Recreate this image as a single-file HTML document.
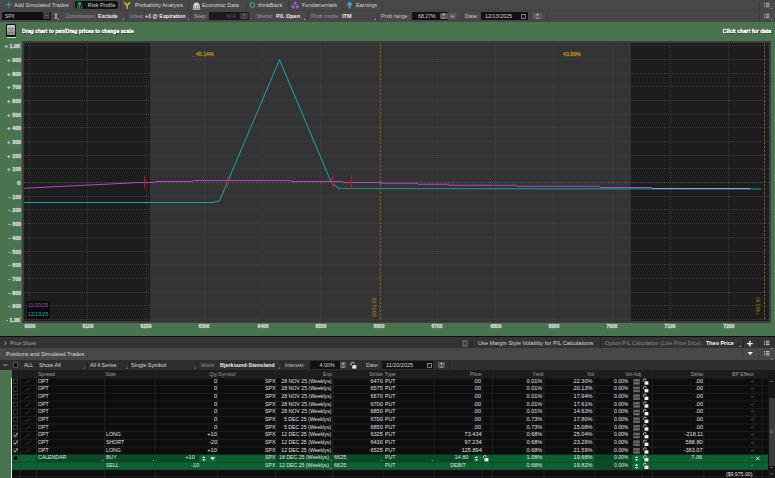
<!DOCTYPE html><html><head><meta charset="utf-8"><style>*{margin:0;padding:0;box-sizing:border-box}
html,body{width:775px;height:478px;overflow:hidden;background:#0d0d0d;font-family:"Liberation Sans", sans-serif;position:relative}
.b{position:absolute}
.t{position:absolute;white-space:nowrap;line-height:1;}
b{font-weight:bold}</style></head><body><div class="b" style="left:0px;top:0px;width:775px;height:22px;background:#484848;"></div>
<div class="b" style="left:0px;top:10.4px;width:775px;height:0.7px;background:#414141;"></div>
<div class="b" style="left:73px;top:0.5px;width:0.8px;height:9.5px;background:#3a3a3a;"></div>
<div class="b" style="left:120px;top:0.5px;width:0.8px;height:9.5px;background:#3a3a3a;"></div>
<div class="b" style="left:188px;top:0.5px;width:0.8px;height:9.5px;background:#3a3a3a;"></div>
<div class="b" style="left:246px;top:0.5px;width:0.8px;height:9.5px;background:#3a3a3a;"></div>
<div class="b" style="left:288px;top:0.5px;width:0.8px;height:9.5px;background:#3a3a3a;"></div>
<div class="b" style="left:342px;top:0.5px;width:0.8px;height:9.5px;background:#3a3a3a;"></div>
<div class="b" style="left:382px;top:0.5px;width:0.8px;height:9.5px;background:#3a3a3a;"></div>
<div class="b" style="left:758.5px;top:0.5px;width:0.8px;height:9.5px;background:#3a3a3a;"></div>
<div class="b" style="left:126px;top:11.5px;width:0.8px;height:9.5px;background:#3a3a3a;"></div>
<div class="b" style="left:190px;top:11.5px;width:0.8px;height:9.5px;background:#3a3a3a;"></div>
<div class="b" style="left:253px;top:11.5px;width:0.8px;height:9.5px;background:#3a3a3a;"></div>
<div class="b" style="left:306.8px;top:11.5px;width:0.8px;height:9.5px;background:#3a3a3a;"></div>
<div class="b" style="left:376.6px;top:11.5px;width:0.8px;height:9.5px;background:#3a3a3a;"></div>
<div class="b" style="left:462px;top:11.5px;width:0.8px;height:9.5px;background:#3a3a3a;"></div>
<div class="b" style="left:547px;top:11.5px;width:0.8px;height:9.5px;background:#3a3a3a;"></div>
<div class="b" style="left:758.5px;top:11.5px;width:0.8px;height:9.5px;background:#3a3a3a;"></div>
<svg class="b" style="left:0;top:0" width="775" height="22"><path d="M8.7 1.9v5.8M5.5 4.8h6.4" stroke="#2aa0b5" stroke-width="1.1"/><path d="M124.3 2.3l2.9 3.2 2.9-3.2M127.2 5.5v3.5" stroke="#e6c01c" stroke-width="1.3" fill="none"/><path d="M193.2 5.2h6.6v3.2h-6.6z" fill="#d8d8d8"/><path d="M193.6 5.2a2.9 2.6 0 0 1 5.8 0z" fill="#d8d8d8"/><rect x="192.6" y="8.6" width="7.8" height="1" fill="#d8d8d8"/><path d="M194.6 5.8v2.3M196.5 5.8v2.3M198.4 5.8v2.3" stroke="#555" stroke-width="0.5"/><circle cx="252.3" cy="5" r="2.3" stroke="#40c080" stroke-width="1" fill="none"/><rect x="293.7" y="1.8" width="2.8" height="2.8" fill="#9b5fd3"/><rect x="291.6" y="5.4" width="2.8" height="2.9" fill="#9b5fd3"/><rect x="295.8" y="5.4" width="2.8" height="2.9" fill="#9b5fd3"/><circle cx="349.6" cy="4.2" r="2.3" fill="#3b9bdc"/><rect x="348.7" y="6.3" width="1.8" height="2.4" fill="#3b9bdc"/><path d="M764 3.3h0.9M765.8 3.3h3.6M764 5.0h0.9M765.8 5.0h3.6M764 6.699999999999999h0.9M765.8 6.699999999999999h3.6" stroke="#c0c0c0" stroke-width="0.9"/><path d="M764 14.3h0.9M765.8 14.3h3.6M764 16.0h0.9M765.8 16.0h3.6M764 17.7h0.9M765.8 17.7h3.6" stroke="#c0c0c0" stroke-width="0.9"/><path d="M122.5 20l1.4-1.4v1.4z M187.8 20l1.4-1.4v1.4z M304 20l1.4-1.4v1.4z M374.6 20l1.4-1.4v1.4z M57.5 20l1.4-1.4v1.4z M770.5 8.8l1.4-1.4v1.4z M770.5 19.8l1.4-1.4v1.4z" fill="#ccc"/></svg>
<div class="b" style="left:75.2px;top:1.3px;width:42.8px;height:7.6px;background:#121212;border-radius:2px;"></div>
<svg class="b" style="left:76px;top:1px" width="8" height="9"><rect x="1.8" y="1.2" width="3.6" height="3.2" fill="#20a04c"/><path d="M2.2 4.2l-0.8 3.8M5 4.2l0.8 3.8M3.6 4.2v3.8" stroke="#20a04c" stroke-width="0.9"/></svg>
<div class="t" style="left:14.2px;top:2.84px;font-size:5.5px;color:#d6d6d6;transform:scaleX(1.013);transform-origin:left top;">Add Simulated Trades</div>
<div class="t" style="left:87.7px;top:2.84px;font-size:5.5px;color:#d6d6d6;transform:scaleX(1.000);transform-origin:left top;">Risk Profile</div>
<div class="t" style="left:134.8px;top:2.84px;font-size:5.5px;color:#d6d6d6;transform:scaleX(1.015);transform-origin:left top;">Probability Analysis</div>
<div class="t" style="left:202.3px;top:2.84px;font-size:5.5px;color:#d6d6d6;transform:scaleX(0.984);transform-origin:left top;">Economic Data</div>
<div class="t" style="left:258.4px;top:2.84px;font-size:5.5px;color:#d6d6d6;transform:scaleX(1.015);transform-origin:left top;">thinkBack</div>
<div class="t" style="left:301.9px;top:2.84px;font-size:5.5px;color:#d6d6d6;transform:scaleX(1.001);transform-origin:left top;">Fundamentals</div>
<div class="t" style="left:355.7px;top:2.84px;font-size:5.5px;color:#d6d6d6;transform:scaleX(0.981);transform-origin:left top;">Earnings</div>
<div class="b" style="left:1.5px;top:11.8px;width:49.3px;height:7.9px;background:#111;"></div>
<div class="b" style="left:42.6px;top:12.4px;width:7.3px;height:6.8px;background:#3c3c3c;"></div>
<svg class="b" style="left:42.6px;top:12.4px" width="8" height="7"><path d="M2.6 3l1.1 1.1 1.1-1.1z" fill="#aaa"/></svg>
<div class="t" style="left:4.7px;top:13.94px;font-size:5.5px;color:#d8d8d8;transform:scaleX(0.854);transform-origin:left top;">SPX</div>
<svg class="b" style="left:53px;top:12px" width="6" height="9"><circle cx="3" cy="2.6" r="1.3" fill="#aaa"/><circle cx="3" cy="5.6" r="1.3" fill="#aaa"/></svg>
<div class="t" style="left:65px;top:13.94px;font-size:5.5px;color:#9a9a9a;transform:scaleX(0.975);transform-origin:left top;">Commission:</div>
<div class="t" style="left:98.3px;top:13.94px;font-size:5.5px;color:#f0f0f0;font-weight:bold;transform:scaleX(0.934);transform-origin:left top;">Exclude</div>
<div class="t" style="left:129.7px;top:13.94px;font-size:5.5px;color:#9a9a9a;transform:scaleX(0.954);transform-origin:left top;">Lines:</div>
<div class="t" style="left:145.4px;top:13.94px;font-size:5.5px;color:#f0f0f0;font-weight:bold;transform:scaleX(0.974);transform-origin:left top;">+1 @ Expiration</div>
<div class="t" style="left:193.9px;top:13.94px;font-size:5.5px;color:#b4b4b4;transform:scaleX(1.004);transform-origin:left top;">Step:</div>
<div class="b" style="left:209.4px;top:12px;width:39.4px;height:7.6px;background:#1b1b1b;"></div>
<div class="t" style="right:539.2px;top:13.94px;font-size:5.5px;color:#5a5a5a;transform:scaleX(1.069);transform-origin:right top;">N/A</div>
<div class="b" style="left:240px;top:12.5px;width:7.8px;height:3.2px;background:#3a3a3a;"></div>
<div class="b" style="left:240px;top:16.2px;width:7.8px;height:3.2px;background:#3a3a3a;"></div>
<svg class="b" style="left:240px;top:12.5px" width="8.8" height="7.9"><path d="M2.60 1.60h2.6M3.90 0.50v2.2M2.60 5.30h2.6" stroke="#8a8a8a" stroke-width="0.6"/></svg>
<div class="t" style="left:257px;top:13.94px;font-size:5.5px;color:#9a9a9a;transform:scaleX(1.030);transform-origin:left top;">Metric:</div>
<div class="t" style="left:275.7px;top:13.94px;font-size:5.5px;color:#f0f0f0;font-weight:bold;transform:scaleX(0.998);transform-origin:left top;">P/L Open</div>
<div class="t" style="left:311.3px;top:13.94px;font-size:5.5px;color:#9a9a9a;transform:scaleX(1.002);transform-origin:left top;">Prob mode:</div>
<div class="t" style="left:341.7px;top:13.94px;font-size:5.5px;color:#f0f0f0;font-weight:bold;transform:scaleX(1.014);transform-origin:left top;">ITM</div>
<div class="t" style="left:380.8px;top:13.94px;font-size:5.5px;color:#c8c8c8;transform:scaleX(0.978);transform-origin:left top;">Prob range:</div>
<div class="b" style="left:412px;top:12px;width:36px;height:7.6px;background:#111;"></div>
<div class="t" style="right:339.5px;top:13.94px;font-size:5.5px;color:#d8d8d8;transform:scaleX(0.943);transform-origin:right top;">68.27%</div>
<div class="b" style="left:440px;top:12.5px;width:7.5px;height:3.2px;background:#5c5c5c;"></div>
<div class="b" style="left:440px;top:16.2px;width:7.5px;height:3.2px;background:#5c5c5c;"></div>
<svg class="b" style="left:440px;top:12.5px" width="8.5" height="7.9"><path d="M2.45 1.60h2.6M3.75 0.50v2.2M2.45 5.30h2.6" stroke="#e0e0e0" stroke-width="0.6"/></svg>
<div class="b" style="left:449px;top:12.5px;width:7px;height:6.6px;background:#5c5c5c;"></div>
<svg class="b" style="left:449px;top:12.5px" width="7" height="7"><path d="M2 2.8h3l-1.5 1.6z" fill="#ccc"/></svg>
<div class="t" style="left:464.6px;top:13.94px;font-size:5.5px;color:#c8c8c8;transform:scaleX(1.019);transform-origin:left top;">Date:</div>
<div class="b" style="left:481px;top:12px;width:47px;height:7.6px;background:#111;"></div>
<div class="t" style="left:484.5px;top:13.94px;font-size:5.5px;color:#d8d8d8;transform:scaleX(0.984);transform-origin:left top;">12/13/2025</div>
<div class="b" style="left:521.3px;top:14.2px;width:5.2px;height:4.4px;background:#1a1a1a;border:0.6px solid #777;border-top:1.2px solid #888;"></div>
<div class="b" style="left:533px;top:12.5px;width:9px;height:3.2px;background:#5c5c5c;"></div>
<div class="b" style="left:533px;top:16.2px;width:9px;height:3.2px;background:#5c5c5c;"></div>
<svg class="b" style="left:533px;top:12.5px" width="10" height="7.9"><path d="M3.20 1.60h2.6M4.50 0.50v2.2M3.20 5.30h2.6" stroke="#e0e0e0" stroke-width="0.6"/></svg>
<div class="b" style="left:0px;top:22px;width:775px;height:314px;background:#4a7350;"></div>
<div class="b" style="left:6px;top:24px;width:10px;height:13px;background:#111;border-radius:1px;"></div>
<div class="b" style="left:7.4px;top:25.4px;width:7.2px;height:9.6px;background:linear-gradient(#d0d0d0,#8a8a8a);border-radius:0.8px;"></div>
<svg class="b" style="left:7px;top:25px" width="9" height="11"><path d="M1.6 3.2h5l-2.5 2.6z" fill="none" stroke="#555" stroke-width="0.6"/><path d="M1.4 7.4h5.4" stroke="#555" stroke-width="0.6"/></svg>
<div class="b" style="left:6.8px;top:37.1px;width:9.1px;height:0.8px;background:#e0e0e0;"></div>
<div class="t" style="left:22.3px;top:28.12px;font-size:6px;color:#fff;-webkit-text-stroke:0.45px #fff;text-shadow:0.7px 0.7px 0.3px #000,-0.5px 0 0.3px #000,0 -0.5px 0.3px #000,0.6px 0 0.3px #000;font-weight:bold;transform:scaleX(0.851);transform-origin:left top;">Drag chart to pan/Drag prices to change scale</div>
<div class="t" style="right:3.5px;top:28.12px;font-size:6px;color:#fff;-webkit-text-stroke:0.45px #fff;text-shadow:0.7px 0.7px 0.3px #000,-0.5px 0 0.3px #000,0 -0.5px 0.3px #000,0.6px 0 0.3px #000;font-weight:bold;transform:scaleX(0.892);transform-origin:right top;">Click chart for data</div>
<div class="b" style="left:22px;top:41px;width:749px;height:282px;background:#3c3c3c;"></div>
<div class="b" style="left:24px;top:43px;width:745px;height:277.5px;background:#1d1d1d;"></div>
<div class="b" style="left:149.5px;top:43px;width:481.5px;height:277.5px;background:#343434;"></div>
<svg class="b" style="left:0;top:0" width="775" height="336"><line x1="24" y1="45.50" x2="769" y2="45.50" stroke="#484848" stroke-width="0.75" stroke-dasharray="1 1"/><line x1="24" y1="59.50" x2="769" y2="59.50" stroke="#484848" stroke-width="0.75" stroke-dasharray="1 1"/><line x1="24" y1="73.50" x2="769" y2="73.50" stroke="#484848" stroke-width="0.75" stroke-dasharray="1 1"/><line x1="24" y1="86.50" x2="769" y2="86.50" stroke="#484848" stroke-width="0.75" stroke-dasharray="1 1"/><line x1="24" y1="100.50" x2="769" y2="100.50" stroke="#484848" stroke-width="0.75" stroke-dasharray="1 1"/><line x1="24" y1="114.50" x2="769" y2="114.50" stroke="#484848" stroke-width="0.75" stroke-dasharray="1 1"/><line x1="24" y1="127.50" x2="769" y2="127.50" stroke="#484848" stroke-width="0.75" stroke-dasharray="1 1"/><line x1="24" y1="141.50" x2="769" y2="141.50" stroke="#484848" stroke-width="0.75" stroke-dasharray="1 1"/><line x1="24" y1="155.50" x2="769" y2="155.50" stroke="#484848" stroke-width="0.75" stroke-dasharray="1 1"/><line x1="24" y1="168.50" x2="769" y2="168.50" stroke="#484848" stroke-width="0.75" stroke-dasharray="1 1"/><line x1="24" y1="182.50" x2="769" y2="182.50" stroke="#666666" stroke-width="0.75" stroke-dasharray="1 1"/><line x1="24" y1="196.50" x2="769" y2="196.50" stroke="#484848" stroke-width="0.75" stroke-dasharray="1 1"/><line x1="24" y1="209.50" x2="769" y2="209.50" stroke="#484848" stroke-width="0.75" stroke-dasharray="1 1"/><line x1="24" y1="223.50" x2="769" y2="223.50" stroke="#484848" stroke-width="0.75" stroke-dasharray="1 1"/><line x1="24" y1="237.50" x2="769" y2="237.50" stroke="#484848" stroke-width="0.75" stroke-dasharray="1 1"/><line x1="24" y1="251.50" x2="769" y2="251.50" stroke="#484848" stroke-width="0.75" stroke-dasharray="1 1"/><line x1="24" y1="264.50" x2="769" y2="264.50" stroke="#484848" stroke-width="0.75" stroke-dasharray="1 1"/><line x1="24" y1="278.50" x2="769" y2="278.50" stroke="#484848" stroke-width="0.75" stroke-dasharray="1 1"/><line x1="24" y1="292.50" x2="769" y2="292.50" stroke="#484848" stroke-width="0.75" stroke-dasharray="1 1"/><line x1="24" y1="305.50" x2="769" y2="305.50" stroke="#484848" stroke-width="0.75" stroke-dasharray="1 1"/><line x1="24" y1="319.50" x2="769" y2="319.50" stroke="#484848" stroke-width="0.75" stroke-dasharray="1 1"/><line x1="29.50" y1="43" x2="29.50" y2="320.5" stroke="#484848" stroke-width="0.7" stroke-dasharray="1 1"/><line x1="87.50" y1="43" x2="87.50" y2="320.5" stroke="#484848" stroke-width="0.7" stroke-dasharray="1 1"/><line x1="146.50" y1="43" x2="146.50" y2="320.5" stroke="#484848" stroke-width="0.7" stroke-dasharray="1 1"/><line x1="204.50" y1="43" x2="204.50" y2="320.5" stroke="#484848" stroke-width="0.7" stroke-dasharray="1 1"/><line x1="262.50" y1="43" x2="262.50" y2="320.5" stroke="#484848" stroke-width="0.7" stroke-dasharray="1 1"/><line x1="320.50" y1="43" x2="320.50" y2="320.5" stroke="#484848" stroke-width="0.7" stroke-dasharray="1 1"/><line x1="379.50" y1="43" x2="379.50" y2="320.5" stroke="#484848" stroke-width="0.7" stroke-dasharray="1 1"/><line x1="437.50" y1="43" x2="437.50" y2="320.5" stroke="#484848" stroke-width="0.7" stroke-dasharray="1 1"/><line x1="495.50" y1="43" x2="495.50" y2="320.5" stroke="#484848" stroke-width="0.7" stroke-dasharray="1 1"/><line x1="553.50" y1="43" x2="553.50" y2="320.5" stroke="#484848" stroke-width="0.7" stroke-dasharray="1 1"/><line x1="612.50" y1="43" x2="612.50" y2="320.5" stroke="#484848" stroke-width="0.7" stroke-dasharray="1 1"/><line x1="670.50" y1="43" x2="670.50" y2="320.5" stroke="#484848" stroke-width="0.7" stroke-dasharray="1 1"/><line x1="728.50" y1="43" x2="728.50" y2="320.5" stroke="#484848" stroke-width="0.7" stroke-dasharray="1 1"/><line x1="380.5" y1="43.5" x2="380.5" y2="320.5" stroke="#9a7318" stroke-width="0.8" stroke-dasharray="2.2 1.6"/><line x1="764.5" y1="43.5" x2="764.5" y2="320.5" stroke="#9a7318" stroke-width="0.8" stroke-dasharray="2.2 1.6"/><path d="M24 202.4H213L219.5 200.8L279.5 59.8L330.5 180.5Q334 186 339.7 188.6L761 188.9" fill="none" stroke="#1c9fa4" stroke-width="1.05"/><path d="M24 188.3L140 182.5H155M155 181.5H193M193 180.5H291M291 181.5H343M343 182.4H380M380 183.3H418M418 184.3H449M449 185.3H517M517 186.3H600M600 187.4H652" fill="none" stroke="#ad4bbd" stroke-width="1.05"/><path d="M652 188.5H750" fill="none" stroke="#9c9ce0" stroke-width="1.05"/><line x1="144.6" y1="175.5" x2="144.6" y2="188.6" stroke="#c81c1c" stroke-width="0.95"/><line x1="227.8" y1="175.5" x2="227.8" y2="188.6" stroke="#c81c1c" stroke-width="0.95"/><line x1="332.4" y1="175.5" x2="332.4" y2="188.6" stroke="#c81c1c" stroke-width="0.95"/><line x1="351.6" y1="175.5" x2="351.6" y2="188.6" stroke="#c81c1c" stroke-width="0.95"/></svg>
<div class="t" style="left:195.5px;top:51.81px;font-size:5.9px;color:#b8861a;-webkit-text-stroke:0.3px currentColor;transform:scaleX(0.875);transform-origin:left top;">45.14%</div>
<div class="b" style="left:191.5px;top:55.6px;width:3px;height:0.7px;border-top:0.7px dotted #6a5520"></div>
<div class="t" style="left:563.2px;top:51.81px;font-size:5.9px;color:#b8861a;-webkit-text-stroke:0.3px currentColor;transform:scaleX(0.890);transform-origin:left top;">43.89%</div>
<div class="t" style="left:374.7px;top:306.5px;font-size:5.6px;color:#a8780f;transform:translate(-50%,-50%) rotate(-90deg) scaleX(0.963);">6603.05</div>
<div class="t" style="left:758.5px;top:305.9px;font-size:5.6px;color:#a8780f;transform:translate(-50%,-50%) rotate(-90deg) scaleX(0.904);">7463.95</div>
<div class="t" style="right:754.2px;top:43.12px;font-size:6px;color:#d8d8d8;-webkit-text-stroke:0.35px currentColor;font-weight:bold;transform:scaleX(0.884);transform-origin:right top;">1.0K</div>
<div class="t" style="right:767.2px;top:43.6px;font-size:5.2px;color:#c8c8c8;-webkit-text-stroke:0.3px currentColor;font-weight:bold;">+</div>
<div class="t" style="right:754.2px;top:57.12px;font-size:6px;color:#d8d8d8;-webkit-text-stroke:0.35px currentColor;font-weight:bold;transform:scaleX(0.879);transform-origin:right top;">900</div>
<div class="t" style="right:764.8px;top:57.6px;font-size:5.2px;color:#c8c8c8;-webkit-text-stroke:0.3px currentColor;font-weight:bold;">+</div>
<div class="t" style="right:754.2px;top:71.12px;font-size:6px;color:#d8d8d8;-webkit-text-stroke:0.35px currentColor;font-weight:bold;transform:scaleX(0.879);transform-origin:right top;">800</div>
<div class="t" style="right:764.8px;top:71.6px;font-size:5.2px;color:#c8c8c8;-webkit-text-stroke:0.3px currentColor;font-weight:bold;">+</div>
<div class="t" style="right:754.2px;top:84.12px;font-size:6px;color:#d8d8d8;-webkit-text-stroke:0.35px currentColor;font-weight:bold;transform:scaleX(0.879);transform-origin:right top;">700</div>
<div class="t" style="right:764.8px;top:84.6px;font-size:5.2px;color:#c8c8c8;-webkit-text-stroke:0.3px currentColor;font-weight:bold;">+</div>
<div class="t" style="right:754.2px;top:98.12px;font-size:6px;color:#d8d8d8;-webkit-text-stroke:0.35px currentColor;font-weight:bold;transform:scaleX(0.879);transform-origin:right top;">600</div>
<div class="t" style="right:764.8px;top:98.6px;font-size:5.2px;color:#c8c8c8;-webkit-text-stroke:0.3px currentColor;font-weight:bold;">+</div>
<div class="t" style="right:754.2px;top:112.12px;font-size:6px;color:#d8d8d8;-webkit-text-stroke:0.35px currentColor;font-weight:bold;transform:scaleX(0.879);transform-origin:right top;">500</div>
<div class="t" style="right:764.8px;top:112.6px;font-size:5.2px;color:#c8c8c8;-webkit-text-stroke:0.3px currentColor;font-weight:bold;">+</div>
<div class="t" style="right:754.2px;top:125.12px;font-size:6px;color:#d8d8d8;-webkit-text-stroke:0.35px currentColor;font-weight:bold;transform:scaleX(0.879);transform-origin:right top;">400</div>
<div class="t" style="right:764.8px;top:125.6px;font-size:5.2px;color:#c8c8c8;-webkit-text-stroke:0.3px currentColor;font-weight:bold;">+</div>
<div class="t" style="right:754.2px;top:139.12px;font-size:6px;color:#d8d8d8;-webkit-text-stroke:0.35px currentColor;font-weight:bold;transform:scaleX(0.879);transform-origin:right top;">300</div>
<div class="t" style="right:764.8px;top:139.6px;font-size:5.2px;color:#c8c8c8;-webkit-text-stroke:0.3px currentColor;font-weight:bold;">+</div>
<div class="t" style="right:754.2px;top:153.12px;font-size:6px;color:#d8d8d8;-webkit-text-stroke:0.35px currentColor;font-weight:bold;transform:scaleX(0.879);transform-origin:right top;">200</div>
<div class="t" style="right:764.8px;top:153.6px;font-size:5.2px;color:#c8c8c8;-webkit-text-stroke:0.3px currentColor;font-weight:bold;">+</div>
<div class="t" style="right:754.2px;top:166.12px;font-size:6px;color:#d8d8d8;-webkit-text-stroke:0.35px currentColor;font-weight:bold;transform:scaleX(0.879);transform-origin:right top;">100</div>
<div class="t" style="right:764.8px;top:166.6px;font-size:5.2px;color:#c8c8c8;-webkit-text-stroke:0.3px currentColor;font-weight:bold;">+</div>
<div class="t" style="right:754.2px;top:180.12px;font-size:6px;color:#d8d8d8;-webkit-text-stroke:0.35px currentColor;font-weight:bold;transform:scaleX(0.959);transform-origin:right top;">0</div>
<div class="t" style="right:754.2px;top:194.12px;font-size:6px;color:#d8d8d8;-webkit-text-stroke:0.35px currentColor;font-weight:bold;transform:scaleX(0.879);transform-origin:right top;">100</div>
<div class="t" style="right:764.8px;top:194.6px;font-size:5.2px;color:#c8c8c8;-webkit-text-stroke:0.3px currentColor;font-weight:bold;">-</div>
<div class="t" style="right:754.2px;top:207.12px;font-size:6px;color:#d8d8d8;-webkit-text-stroke:0.35px currentColor;font-weight:bold;transform:scaleX(0.879);transform-origin:right top;">200</div>
<div class="t" style="right:764.8px;top:207.6px;font-size:5.2px;color:#c8c8c8;-webkit-text-stroke:0.3px currentColor;font-weight:bold;">-</div>
<div class="t" style="right:754.2px;top:221.12px;font-size:6px;color:#d8d8d8;-webkit-text-stroke:0.35px currentColor;font-weight:bold;transform:scaleX(0.879);transform-origin:right top;">300</div>
<div class="t" style="right:764.8px;top:221.6px;font-size:5.2px;color:#c8c8c8;-webkit-text-stroke:0.3px currentColor;font-weight:bold;">-</div>
<div class="t" style="right:754.2px;top:235.12px;font-size:6px;color:#d8d8d8;-webkit-text-stroke:0.35px currentColor;font-weight:bold;transform:scaleX(0.879);transform-origin:right top;">400</div>
<div class="t" style="right:764.8px;top:235.6px;font-size:5.2px;color:#c8c8c8;-webkit-text-stroke:0.3px currentColor;font-weight:bold;">-</div>
<div class="t" style="right:754.2px;top:249.12px;font-size:6px;color:#d8d8d8;-webkit-text-stroke:0.35px currentColor;font-weight:bold;transform:scaleX(0.879);transform-origin:right top;">500</div>
<div class="t" style="right:764.8px;top:249.6px;font-size:5.2px;color:#c8c8c8;-webkit-text-stroke:0.3px currentColor;font-weight:bold;">-</div>
<div class="t" style="right:754.2px;top:262.12px;font-size:6px;color:#d8d8d8;-webkit-text-stroke:0.35px currentColor;font-weight:bold;transform:scaleX(0.879);transform-origin:right top;">600</div>
<div class="t" style="right:764.8px;top:262.6px;font-size:5.2px;color:#c8c8c8;-webkit-text-stroke:0.3px currentColor;font-weight:bold;">-</div>
<div class="t" style="right:754.2px;top:276.12px;font-size:6px;color:#d8d8d8;-webkit-text-stroke:0.35px currentColor;font-weight:bold;transform:scaleX(0.879);transform-origin:right top;">700</div>
<div class="t" style="right:764.8px;top:276.6px;font-size:5.2px;color:#c8c8c8;-webkit-text-stroke:0.3px currentColor;font-weight:bold;">-</div>
<div class="t" style="right:754.2px;top:290.12px;font-size:6px;color:#d8d8d8;-webkit-text-stroke:0.35px currentColor;font-weight:bold;transform:scaleX(0.879);transform-origin:right top;">800</div>
<div class="t" style="right:764.8px;top:290.6px;font-size:5.2px;color:#c8c8c8;-webkit-text-stroke:0.3px currentColor;font-weight:bold;">-</div>
<div class="t" style="right:754.2px;top:303.12px;font-size:6px;color:#d8d8d8;-webkit-text-stroke:0.35px currentColor;font-weight:bold;transform:scaleX(0.879);transform-origin:right top;">900</div>
<div class="t" style="right:764.8px;top:303.6px;font-size:5.2px;color:#c8c8c8;-webkit-text-stroke:0.3px currentColor;font-weight:bold;">-</div>
<div class="t" style="right:754.2px;top:317.12px;font-size:6px;color:#d8d8d8;-webkit-text-stroke:0.35px currentColor;font-weight:bold;transform:scaleX(0.884);transform-origin:right top;">1.0K</div>
<div class="t" style="right:767.2px;top:317.6px;font-size:5.2px;color:#c8c8c8;-webkit-text-stroke:0.3px currentColor;font-weight:bold;">-</div>
<div class="t" style="left:-20.4px;width:100px;text-align:center;top:324.29px;font-size:5.8px;color:#dadada;-webkit-text-stroke:0.3px currentColor;font-weight:bold;transform:scaleX(0.853);transform-origin:center top;">6000</div>
<div class="t" style="left:37.849999999999994px;width:100px;text-align:center;top:324.29px;font-size:5.8px;color:#dadada;-webkit-text-stroke:0.3px currentColor;font-weight:bold;transform:scaleX(0.853);transform-origin:center top;">6100</div>
<div class="t" style="left:96.1px;width:100px;text-align:center;top:324.29px;font-size:5.8px;color:#dadada;-webkit-text-stroke:0.3px currentColor;font-weight:bold;transform:scaleX(0.853);transform-origin:center top;">6200</div>
<div class="t" style="left:154.35px;width:100px;text-align:center;top:324.29px;font-size:5.8px;color:#dadada;-webkit-text-stroke:0.3px currentColor;font-weight:bold;transform:scaleX(0.853);transform-origin:center top;">6300</div>
<div class="t" style="left:212.60000000000002px;width:100px;text-align:center;top:324.29px;font-size:5.8px;color:#dadada;-webkit-text-stroke:0.3px currentColor;font-weight:bold;transform:scaleX(0.853);transform-origin:center top;">6400</div>
<div class="t" style="left:270.85px;width:100px;text-align:center;top:324.29px;font-size:5.8px;color:#dadada;-webkit-text-stroke:0.3px currentColor;font-weight:bold;transform:scaleX(0.853);transform-origin:center top;">6500</div>
<div class="t" style="left:329.1px;width:100px;text-align:center;top:324.29px;font-size:5.8px;color:#dadada;-webkit-text-stroke:0.3px currentColor;font-weight:bold;transform:scaleX(0.853);transform-origin:center top;">6600</div>
<div class="t" style="left:387.35px;width:100px;text-align:center;top:324.29px;font-size:5.8px;color:#dadada;-webkit-text-stroke:0.3px currentColor;font-weight:bold;transform:scaleX(0.853);transform-origin:center top;">6700</div>
<div class="t" style="left:445.6px;width:100px;text-align:center;top:324.29px;font-size:5.8px;color:#dadada;-webkit-text-stroke:0.3px currentColor;font-weight:bold;transform:scaleX(0.853);transform-origin:center top;">6800</div>
<div class="t" style="left:503.85px;width:100px;text-align:center;top:324.29px;font-size:5.8px;color:#dadada;-webkit-text-stroke:0.3px currentColor;font-weight:bold;transform:scaleX(0.853);transform-origin:center top;">6900</div>
<div class="t" style="left:562.1px;width:100px;text-align:center;top:324.29px;font-size:5.8px;color:#dadada;-webkit-text-stroke:0.3px currentColor;font-weight:bold;transform:scaleX(0.853);transform-origin:center top;">7000</div>
<div class="t" style="left:620.35px;width:100px;text-align:center;top:324.29px;font-size:5.8px;color:#dadada;-webkit-text-stroke:0.3px currentColor;font-weight:bold;transform:scaleX(0.853);transform-origin:center top;">7100</div>
<div class="t" style="left:678.6px;width:100px;text-align:center;top:324.29px;font-size:5.8px;color:#dadada;-webkit-text-stroke:0.3px currentColor;font-weight:bold;transform:scaleX(0.853);transform-origin:center top;">7200</div>
<div class="b" style="left:27px;top:300.6px;width:22.7px;height:18px;background:#0a0a0a;"></div>
<div class="t" style="left:28.2px;top:302.96px;font-size:5.6px;color:#b04cbf;transform:scaleX(0.949);transform-origin:left top;">11/20/25</div>
<div class="t" style="left:28.2px;top:311.76px;font-size:5.6px;color:#1ea8ae;transform:scaleX(0.931);transform-origin:left top;">12/13/25</div>
<div class="b" style="left:0px;top:335.8px;width:775px;height:1.6px;background:#0e0e0e;"></div>
<div class="b" style="left:0px;top:337.4px;width:775px;height:10.4px;background:#333333;"></div>
<div class="b" style="left:0px;top:347.8px;width:775px;height:12px;background:#484848;"></div>
<div class="b" style="left:0px;top:359.8px;width:775px;height:10.2px;background:#2e2e2e;"></div>
<div class="b" style="left:599.5px;top:338px;width:0.8px;height:9.5px;background:#262626;"></div>
<div class="b" style="left:742.7px;top:338px;width:0.8px;height:9.5px;background:#262626;"></div>
<div class="b" style="left:758px;top:338px;width:0.8px;height:9.5px;background:#262626;"></div>
<div class="b" style="left:741.5px;top:349px;width:0.8px;height:10px;background:#3a3a3a;"></div>
<div class="b" style="left:758.3px;top:349px;width:0.8px;height:10px;background:#3a3a3a;"></div>
<div class="b" style="left:35.9px;top:360.5px;width:0.8px;height:9px;background:#232323;"></div>
<div class="b" style="left:86.6px;top:360.5px;width:0.8px;height:9px;background:#232323;"></div>
<div class="b" style="left:128.5px;top:360.5px;width:0.8px;height:9px;background:#232323;"></div>
<div class="b" style="left:197.3px;top:360.5px;width:0.8px;height:9px;background:#232323;"></div>
<div class="b" style="left:282px;top:360.5px;width:0.8px;height:9px;background:#232323;"></div>
<div class="b" style="left:361.5px;top:360.5px;width:0.8px;height:9px;background:#232323;"></div>
<div class="b" style="left:448.8px;top:360.5px;width:0.8px;height:9px;background:#232323;"></div>
<svg class="b" style="left:0;top:330" width="775" height="40"><path d="M4.6 11.6l1.6 1.6-1.6 1.6" stroke="#b0b0b0" stroke-width="0.9" fill="none"/></svg>
<div class="t" style="left:10px;top:340.94px;font-size:5.5px;color:#a8a8a8;transform:scaleX(0.912);transform-origin:left top;">Price Slices</div>
<div class="b" style="left:460.2px;top:338.2px;width:0.7px;height:9.4px;background:#2a2a2a;"></div>
<div class="b" style="left:468.6px;top:339.6px;width:4.4px;height:7.2px;background:#2c2c2c;"></div>
<div class="b" style="left:462px;top:340.4px;width:5.8px;height:6.4px;background:#575757;border-radius:0.6px;"></div>
<svg class="b" style="left:462px;top:340.4px" width="6" height="7"><circle cx="2.9" cy="3.2" r="1.1" fill="#3a3a3a"/></svg>
<div class="t" style="left:477.6px;top:340.94px;font-size:5.5px;color:#dadada;transform:scaleX(1.025);transform-origin:left top;">Use Margin Style Volatility for P/L Calculations</div>
<div class="t" style="left:604.8px;top:340.94px;font-size:5.5px;color:#8a8a8a;transform:scaleX(0.988);transform-origin:left top;">Option P/L Calculation (Live Price Slice) :</div>
<div class="t" style="left:706.2px;top:340.94px;font-size:5.5px;color:#ffffff;font-weight:bold;transform:scaleX(0.985);transform-origin:left top;">Theo Price</div>
<div class="t" style="left:5.7px;top:351.54px;font-size:5.5px;color:#dedede;transform:scaleX(1.011);transform-origin:left top;">Positions and Simulated Trades</div>
<div class="b" style="left:13.3px;top:362.4px;width:5.2px;height:5.2px;background:#050505;border:0.7px solid #505050;"></div>
<div class="t" style="left:23.5px;top:362.54px;font-size:5.5px;color:#dadada;transform:scaleX(0.920);transform-origin:left top;">ALL</div>
<div class="t" style="left:38.6px;top:362.54px;font-size:5.5px;color:#dadada;transform:scaleX(1.033);transform-origin:left top;">Show All</div>
<div class="t" style="left:90px;top:362.54px;font-size:5.5px;color:#dadada;transform:scaleX(0.949);transform-origin:left top;">All 4 Series</div>
<div class="t" style="left:130.9px;top:362.54px;font-size:5.5px;color:#dadada;transform:scaleX(1.001);transform-origin:left top;">Single Symbol</div>
<div class="t" style="left:201.3px;top:362.54px;font-size:5.5px;color:#8a8a8a;transform:scaleX(0.878);transform-origin:left top;">Model:</div>
<div class="t" style="left:219.8px;top:362.54px;font-size:5.5px;color:#f2f2f2;font-weight:bold;transform:scaleX(0.993);transform-origin:left top;">Bjerksund-Stensland</div>
<div class="t" style="left:284.8px;top:362.54px;font-size:5.5px;color:#c8c8c8;transform:scaleX(1.001);transform-origin:left top;">Interest:</div>
<div class="b" style="left:310px;top:361.3px;width:29.5px;height:7.4px;background:#111;"></div>
<div class="t" style="right:440.3px;top:362.54px;font-size:5.5px;color:#dadada;transform:scaleX(0.962);transform-origin:right top;">4.00%</div>
<div class="b" style="left:339.9px;top:361.6px;width:6.6px;height:3.2px;background:#5a5a5a;"></div>
<div class="b" style="left:339.9px;top:365.3px;width:6.6px;height:3.2px;background:#5a5a5a;"></div>
<svg class="b" style="left:339.9px;top:361.6px" width="7.6" height="7.9"><path d="M2.00 1.60h2.6M3.30 0.50v2.2M2.00 5.30h2.6" stroke="#cfcfcf" stroke-width="0.6"/></svg>
<div class="t" style="left:366px;top:362.54px;font-size:5.5px;color:#c8c8c8;transform:scaleX(0.981);transform-origin:left top;">Date:</div>
<div class="b" style="left:381.7px;top:361.3px;width:51.3px;height:7.4px;background:#111;"></div>
<div class="t" style="left:385.9px;top:362.54px;font-size:5.5px;color:#dadada;transform:scaleX(0.999);transform-origin:left top;">11/20/2025</div>
<div class="b" style="left:426.5px;top:363.4px;width:5.2px;height:4.4px;background:#1a1a1a;border:0.6px solid #777;border-top:1.2px solid #888;"></div>
<div class="b" style="left:437.5px;top:361.6px;width:7px;height:3.2px;background:#5a5a5a;"></div>
<div class="b" style="left:437.5px;top:365.3px;width:7px;height:3.2px;background:#5a5a5a;"></div>
<svg class="b" style="left:437.5px;top:361.6px" width="8" height="7.9"><path d="M2.20 1.60h2.6M3.50 0.50v2.2M2.20 5.30h2.6" stroke="#cfcfcf" stroke-width="0.6"/></svg>
<svg class="b" style="left:0;top:330" width="775" height="40"><path d="M749.9 10.8v5.6M747.1 13.6h5.6" stroke="#fff" stroke-width="1.3"/><path d="M764 11.2h0.9M765.8 11.2h3.7M764 12.899999999999999h0.9M765.8 12.899999999999999h3.7M764 14.6h0.9M765.8 14.6h3.7" stroke="#d0d0d0" stroke-width="0.9"/><path d="M764 21.6h0.9M765.8 21.6h3.7M764 23.3h0.9M765.8 23.3h3.7M764 25.0h0.9M765.8 25.0h3.7" stroke="#d0d0d0" stroke-width="0.9"/><path d="M747.5 22h5.3l-2.65 3.2z" fill="#eee"/><path d="M739 17l1.4-1.4v1.4z M771 19l1.4-1.4v1.4z M771 29.5l1.4-1.4v1.4z" fill="#ccc"/><path d="M3.6 34.2l1.7 1.7 1.7-1.7" stroke="#d0d0d0" stroke-width="0.9" fill="none"/><path d="M83 38.6l1.4-1.4v1.4z M126 38.6l1.4-1.4v1.4z M194.5 38.6l1.4-1.4v1.4z M278.5 38.6l1.4-1.4v1.4z" fill="#ccc"/><path d="M351 35.5v-1.6a1.6 1.6 0 0 1 3.2 0" stroke="#eee" stroke-width="0.8" fill="none"/><rect x="352.3" y="35.2" width="4" height="3.4" fill="#eee"/></svg>
<div class="b" style="left:0px;top:370px;width:12px;height:108px;background:#4a7350;"></div>
<div class="b" style="left:11px;top:378.2px;width:0.9px;height:100px;background:#f0f0f0;"></div>
<div class="b" style="left:12px;top:370px;width:756px;height:108px;background:#0d0d0d;"></div>
<div class="b" style="left:12px;top:370px;width:756px;height:8px;background:#1d1d1d;"></div>
<div class="b" style="left:12px;top:454.67px;width:756px;height:15.334px;background:#0c6131;"></div>
<svg class="b" style="left:0;top:0" width="775" height="478"><rect x="36.9" y="455.27" width="67.40" height="6.47" fill="#0a4826"/><rect x="104.9" y="455.27" width="50.10" height="6.47" fill="#0a4826"/><rect x="155.5" y="455.27" width="44.00" height="6.47" fill="#0a4826"/><rect x="275.8" y="455.27" width="56.80" height="6.47" fill="#0a4826"/><rect x="333.1" y="455.27" width="49.70" height="6.47" fill="#0a4826"/><rect x="383.3" y="455.27" width="50.50" height="6.47" fill="#0a4826"/><rect x="434.3" y="455.27" width="38.20" height="6.47" fill="#0a4826"/><rect x="595" y="455.27" width="37.20" height="6.47" fill="#0a4826"/><rect x="595" y="462.94" width="37.2" height="6.47" fill="#0a4826"/><line x1="12" y1="378.00" x2="768" y2="378.00" stroke="#262626" stroke-width="0.7"/><line x1="12" y1="385.67" x2="768" y2="385.67" stroke="#262626" stroke-width="0.7"/><line x1="12" y1="393.33" x2="768" y2="393.33" stroke="#262626" stroke-width="0.7"/><line x1="12" y1="401.00" x2="768" y2="401.00" stroke="#262626" stroke-width="0.7"/><line x1="12" y1="408.67" x2="768" y2="408.67" stroke="#262626" stroke-width="0.7"/><line x1="12" y1="416.33" x2="768" y2="416.33" stroke="#262626" stroke-width="0.7"/><line x1="12" y1="424.00" x2="768" y2="424.00" stroke="#262626" stroke-width="0.7"/><line x1="12" y1="431.67" x2="768" y2="431.67" stroke="#262626" stroke-width="0.7"/><line x1="12" y1="439.34" x2="768" y2="439.34" stroke="#262626" stroke-width="0.7"/><line x1="12" y1="447.00" x2="768" y2="447.00" stroke="#262626" stroke-width="0.7"/><line x1="12" y1="454.67" x2="768" y2="454.67" stroke="#0a4826" stroke-width="0.7"/><line x1="12" y1="462.34" x2="768" y2="462.34" stroke="#0a4826" stroke-width="0.7"/><line x1="12" y1="470.00" x2="768" y2="470.00" stroke="#262626" stroke-width="0.7"/><line x1="12" y1="476.6" x2="768" y2="476.6" stroke="#262626" stroke-width="0.7"/><line x1="20.3" y1="370" x2="20.3" y2="454.67" stroke="#2a2a2a" stroke-width="0.7"/><line x1="20.3" y1="454.67" x2="20.3" y2="470.00" stroke="#0a5028" stroke-width="0.7"/><line x1="20.3" y1="470.00" x2="20.3" y2="478" stroke="#2a2a2a" stroke-width="0.7"/><line x1="36.5" y1="370" x2="36.5" y2="454.67" stroke="#2a2a2a" stroke-width="0.7"/><line x1="36.5" y1="454.67" x2="36.5" y2="470.00" stroke="#0a5028" stroke-width="0.7"/><line x1="36.5" y1="470.00" x2="36.5" y2="478" stroke="#2a2a2a" stroke-width="0.7"/><line x1="104.6" y1="370" x2="104.6" y2="454.67" stroke="#2a2a2a" stroke-width="0.7"/><line x1="104.6" y1="454.67" x2="104.6" y2="470.00" stroke="#0a5028" stroke-width="0.7"/><line x1="104.6" y1="470.00" x2="104.6" y2="478" stroke="#2a2a2a" stroke-width="0.7"/><line x1="155.2" y1="370" x2="155.2" y2="454.67" stroke="#2a2a2a" stroke-width="0.7"/><line x1="155.2" y1="454.67" x2="155.2" y2="470.00" stroke="#0a5028" stroke-width="0.7"/><line x1="155.2" y1="470.00" x2="155.2" y2="478" stroke="#2a2a2a" stroke-width="0.7"/><line x1="217.5" y1="370" x2="217.5" y2="454.67" stroke="#2a2a2a" stroke-width="0.7"/><line x1="217.5" y1="454.67" x2="217.5" y2="470.00" stroke="#0a5028" stroke-width="0.7"/><line x1="217.5" y1="470.00" x2="217.5" y2="478" stroke="#2a2a2a" stroke-width="0.7"/><line x1="275.5" y1="370" x2="275.5" y2="454.67" stroke="#2a2a2a" stroke-width="0.7"/><line x1="275.5" y1="454.67" x2="275.5" y2="470.00" stroke="#0a5028" stroke-width="0.7"/><line x1="275.5" y1="470.00" x2="275.5" y2="478" stroke="#2a2a2a" stroke-width="0.7"/><line x1="332.8" y1="370" x2="332.8" y2="454.67" stroke="#2a2a2a" stroke-width="0.7"/><line x1="332.8" y1="454.67" x2="332.8" y2="470.00" stroke="#0a5028" stroke-width="0.7"/><line x1="332.8" y1="470.00" x2="332.8" y2="478" stroke="#2a2a2a" stroke-width="0.7"/><line x1="383" y1="370" x2="383" y2="454.67" stroke="#2a2a2a" stroke-width="0.7"/><line x1="383" y1="454.67" x2="383" y2="470.00" stroke="#0a5028" stroke-width="0.7"/><line x1="383" y1="470.00" x2="383" y2="478" stroke="#2a2a2a" stroke-width="0.7"/><line x1="434" y1="370" x2="434" y2="454.67" stroke="#2a2a2a" stroke-width="0.7"/><line x1="434" y1="454.67" x2="434" y2="470.00" stroke="#0a5028" stroke-width="0.7"/><line x1="434" y1="470.00" x2="434" y2="478" stroke="#2a2a2a" stroke-width="0.7"/><line x1="482" y1="370" x2="482" y2="454.67" stroke="#2a2a2a" stroke-width="0.7"/><line x1="482" y1="454.67" x2="482" y2="470.00" stroke="#0a5028" stroke-width="0.7"/><line x1="482" y1="470.00" x2="482" y2="478" stroke="#2a2a2a" stroke-width="0.7"/><line x1="492.3" y1="370" x2="492.3" y2="454.67" stroke="#2a2a2a" stroke-width="0.7"/><line x1="492.3" y1="454.67" x2="492.3" y2="470.00" stroke="#0a5028" stroke-width="0.7"/><line x1="492.3" y1="470.00" x2="492.3" y2="478" stroke="#2a2a2a" stroke-width="0.7"/><line x1="544" y1="370" x2="544" y2="454.67" stroke="#2a2a2a" stroke-width="0.7"/><line x1="544" y1="454.67" x2="544" y2="470.00" stroke="#0a5028" stroke-width="0.7"/><line x1="544" y1="470.00" x2="544" y2="478" stroke="#2a2a2a" stroke-width="0.7"/><line x1="594.7" y1="370" x2="594.7" y2="454.67" stroke="#2a2a2a" stroke-width="0.7"/><line x1="594.7" y1="454.67" x2="594.7" y2="470.00" stroke="#0a5028" stroke-width="0.7"/><line x1="594.7" y1="470.00" x2="594.7" y2="478" stroke="#2a2a2a" stroke-width="0.7"/><line x1="641.9" y1="370" x2="641.9" y2="454.67" stroke="#2a2a2a" stroke-width="0.7"/><line x1="641.9" y1="454.67" x2="641.9" y2="470.00" stroke="#0a5028" stroke-width="0.7"/><line x1="641.9" y1="470.00" x2="641.9" y2="478" stroke="#2a2a2a" stroke-width="0.7"/><line x1="652.2" y1="370" x2="652.2" y2="454.67" stroke="#2a2a2a" stroke-width="0.7"/><line x1="652.2" y1="454.67" x2="652.2" y2="470.00" stroke="#0a5028" stroke-width="0.7"/><line x1="652.2" y1="470.00" x2="652.2" y2="478" stroke="#2a2a2a" stroke-width="0.7"/><line x1="703.8" y1="370" x2="703.8" y2="454.67" stroke="#2a2a2a" stroke-width="0.7"/><line x1="703.8" y1="454.67" x2="703.8" y2="470.00" stroke="#0a5028" stroke-width="0.7"/><line x1="703.8" y1="470.00" x2="703.8" y2="478" stroke="#2a2a2a" stroke-width="0.7"/><line x1="754" y1="370" x2="754" y2="454.67" stroke="#2a2a2a" stroke-width="0.7"/><line x1="754" y1="454.67" x2="754" y2="470.00" stroke="#0a5028" stroke-width="0.7"/><line x1="754" y1="470.00" x2="754" y2="478" stroke="#2a2a2a" stroke-width="0.7"/><line x1="762" y1="370" x2="762" y2="454.67" stroke="#2a2a2a" stroke-width="0.7"/><line x1="762" y1="454.67" x2="762" y2="470.00" stroke="#0a5028" stroke-width="0.7"/><line x1="762" y1="470.00" x2="762" y2="478" stroke="#2a2a2a" stroke-width="0.7"/><rect x="199.6" y="455.27" width="7.4" height="6.47" fill="#0e6c38"/><rect x="207.6" y="455.27" width="8.6" height="6.47" fill="#0e6c38"/><rect x="473" y="455.27" width="8.5" height="6.47" fill="#0e6c38"/><rect x="632.6" y="455.27" width="8.6" height="6.47" fill="#0e6c38"/><rect x="632.6" y="462.94" width="8.6" height="6.47" fill="#0e6c38"/></svg>
<div class="b" style="left:768px;top:370px;width:7px;height:108px;background:#171717;"></div>
<div class="b" style="left:768.6px;top:397.7px;width:6.2px;height:68.5px;background:#3a3a3a;"></div>
<svg class="b" style="left:768px;top:370px" width="7" height="108"><path d="M2.2 11.4h2.6M2.2 61h2.6M2.2 62.6h2.6M2.2 97.5h2.6M2.2 103.8h2.6" stroke="#8a8a8a" stroke-width="0.7"/></svg>
<div class="t" style="left:37.5px;top:371.8px;font-size:5.2px;color:#9c9c9c;transform:scaleX(1.014);transform-origin:left top;">Spread</div>
<div class="t" style="left:105.5px;top:371.8px;font-size:5.2px;color:#9c9c9c;">Side</div>
<div class="t" style="right:557.8px;top:371.8px;font-size:5.2px;color:#9c9c9c;">Qty</div>
<div class="t" style="left:218.3px;top:371.8px;font-size:5.2px;color:#9c9c9c;">Symbol</div>
<div class="t" style="right:443px;top:371.8px;font-size:5.2px;color:#9c9c9c;">Exp</div>
<div class="t" style="right:392.4px;top:371.8px;font-size:5.2px;color:#9c9c9c;">Strike</div>
<div class="t" style="left:384.5px;top:371.8px;font-size:5.2px;color:#9c9c9c;">Type</div>
<div class="t" style="right:293.5px;top:371.8px;font-size:5.2px;color:#9c9c9c;">Price</div>
<div class="t" style="right:231.5px;top:371.8px;font-size:5.2px;color:#9c9c9c;">Yield</div>
<div class="t" style="right:180.8px;top:371.8px;font-size:5.2px;color:#9c9c9c;">Vol</div>
<div class="t" style="right:134px;top:371.8px;font-size:5.2px;color:#9c9c9c;">Vol Adj</div>
<div class="t" style="right:72px;top:371.8px;font-size:5.2px;color:#9c9c9c;">Delta</div>
<div class="t" style="right:21.5px;top:371.8px;font-size:5.2px;color:#9c9c9c;">BP Effect</div>
<div class="t" style="left:37.6px;top:378.73px;font-size:5.75px;color:#e2e2e2;transform:scaleX(0.904);transform-origin:left top;">OPT</div>
<div class="t" style="right:558px;top:378.73px;font-size:5.75px;color:#e2e2e2;transform:scaleX(0.968);transform-origin:right top;">0</div>
<div class="t" style="right:499.8px;top:378.73px;font-size:5.75px;color:#e2e2e2;transform:scaleX(0.904);transform-origin:right top;">SPX</div>
<div class="t" style="right:444px;top:378.73px;font-size:5.75px;color:#e2e2e2;transform:scaleX(0.904);transform-origin:right top;">28 NOV 25 (Weeklys)</div>
<div class="t" style="right:392.4px;top:378.73px;font-size:5.75px;color:#e2e2e2;transform:scaleX(0.969);transform-origin:right top;">6470</div>
<div class="t" style="left:384.6px;top:378.73px;font-size:5.75px;color:#e2e2e2;transform:scaleX(0.904);transform-origin:left top;">PUT</div>
<div class="t" style="right:293.6px;top:378.73px;font-size:5.75px;color:#e2e2e2;transform:scaleX(0.968);transform-origin:right top;">.00</div>
<div class="t" style="right:232.8px;top:378.73px;font-size:5.75px;color:#e2e2e2;transform:scaleX(0.968);transform-origin:right top;">0.01%</div>
<div class="t" style="right:182.4px;top:378.73px;font-size:5.75px;color:#e2e2e2;transform:scaleX(0.968);transform-origin:right top;">22.30%</div>
<div class="t" style="right:147.2px;top:378.73px;font-size:5.75px;color:#e2e2e2;transform:scaleX(0.883);transform-origin:right top;">0.00%</div>
<div class="t" style="right:72.4px;top:378.73px;font-size:5.75px;color:#e2e2e2;transform:scaleX(0.968);transform-origin:right top;">.00</div>
<div class="t" style="right:22.5px;top:378.73px;font-size:5.75px;color:#e2e2e2;transform:scaleX(0.904);transform-origin:right top;">-</div>
<div class="t" style="left:37.6px;top:386.4px;font-size:5.75px;color:#e2e2e2;transform:scaleX(0.904);transform-origin:left top;">OPT</div>
<div class="t" style="right:558px;top:386.4px;font-size:5.75px;color:#e2e2e2;transform:scaleX(0.968);transform-origin:right top;">0</div>
<div class="t" style="right:499.8px;top:386.4px;font-size:5.75px;color:#e2e2e2;transform:scaleX(0.904);transform-origin:right top;">SPX</div>
<div class="t" style="right:444px;top:386.4px;font-size:5.75px;color:#e2e2e2;transform:scaleX(0.904);transform-origin:right top;">28 NOV 25 (Weeklys)</div>
<div class="t" style="right:392.4px;top:386.4px;font-size:5.75px;color:#e2e2e2;transform:scaleX(0.969);transform-origin:right top;">6575</div>
<div class="t" style="left:384.6px;top:386.4px;font-size:5.75px;color:#e2e2e2;transform:scaleX(0.904);transform-origin:left top;">PUT</div>
<div class="t" style="right:293.6px;top:386.4px;font-size:5.75px;color:#e2e2e2;transform:scaleX(0.968);transform-origin:right top;">.00</div>
<div class="t" style="right:232.8px;top:386.4px;font-size:5.75px;color:#e2e2e2;transform:scaleX(0.968);transform-origin:right top;">0.01%</div>
<div class="t" style="right:182.4px;top:386.4px;font-size:5.75px;color:#e2e2e2;transform:scaleX(0.968);transform-origin:right top;">20.13%</div>
<div class="t" style="right:147.2px;top:386.4px;font-size:5.75px;color:#e2e2e2;transform:scaleX(0.883);transform-origin:right top;">0.00%</div>
<div class="t" style="right:72.4px;top:386.4px;font-size:5.75px;color:#e2e2e2;transform:scaleX(0.968);transform-origin:right top;">.00</div>
<div class="t" style="right:22.5px;top:386.4px;font-size:5.75px;color:#e2e2e2;transform:scaleX(0.904);transform-origin:right top;">-</div>
<div class="t" style="left:37.6px;top:394.07px;font-size:5.75px;color:#e2e2e2;transform:scaleX(0.904);transform-origin:left top;">OPT</div>
<div class="t" style="right:558px;top:394.07px;font-size:5.75px;color:#e2e2e2;transform:scaleX(0.968);transform-origin:right top;">0</div>
<div class="t" style="right:499.8px;top:394.07px;font-size:5.75px;color:#e2e2e2;transform:scaleX(0.904);transform-origin:right top;">SPX</div>
<div class="t" style="right:444px;top:394.07px;font-size:5.75px;color:#e2e2e2;transform:scaleX(0.904);transform-origin:right top;">28 NOV 25 (Weeklys)</div>
<div class="t" style="right:392.4px;top:394.07px;font-size:5.75px;color:#e2e2e2;transform:scaleX(0.969);transform-origin:right top;">6670</div>
<div class="t" style="left:384.6px;top:394.07px;font-size:5.75px;color:#e2e2e2;transform:scaleX(0.904);transform-origin:left top;">PUT</div>
<div class="t" style="right:293.6px;top:394.07px;font-size:5.75px;color:#e2e2e2;transform:scaleX(0.968);transform-origin:right top;">.00</div>
<div class="t" style="right:232.8px;top:394.07px;font-size:5.75px;color:#e2e2e2;transform:scaleX(0.968);transform-origin:right top;">0.01%</div>
<div class="t" style="right:182.4px;top:394.07px;font-size:5.75px;color:#e2e2e2;transform:scaleX(0.968);transform-origin:right top;">17.94%</div>
<div class="t" style="right:147.2px;top:394.07px;font-size:5.75px;color:#e2e2e2;transform:scaleX(0.883);transform-origin:right top;">0.00%</div>
<div class="t" style="right:72.4px;top:394.07px;font-size:5.75px;color:#e2e2e2;transform:scaleX(0.968);transform-origin:right top;">.00</div>
<div class="t" style="right:22.5px;top:394.07px;font-size:5.75px;color:#e2e2e2;transform:scaleX(0.904);transform-origin:right top;">-</div>
<div class="t" style="left:37.6px;top:401.73px;font-size:5.75px;color:#e2e2e2;transform:scaleX(0.904);transform-origin:left top;">OPT</div>
<div class="t" style="right:558px;top:401.73px;font-size:5.75px;color:#e2e2e2;transform:scaleX(0.968);transform-origin:right top;">0</div>
<div class="t" style="right:499.8px;top:401.73px;font-size:5.75px;color:#e2e2e2;transform:scaleX(0.904);transform-origin:right top;">SPX</div>
<div class="t" style="right:444px;top:401.73px;font-size:5.75px;color:#e2e2e2;transform:scaleX(0.904);transform-origin:right top;">28 NOV 25 (Weeklys)</div>
<div class="t" style="right:392.4px;top:401.73px;font-size:5.75px;color:#e2e2e2;transform:scaleX(0.969);transform-origin:right top;">6700</div>
<div class="t" style="left:384.6px;top:401.73px;font-size:5.75px;color:#e2e2e2;transform:scaleX(0.904);transform-origin:left top;">PUT</div>
<div class="t" style="right:293.6px;top:401.73px;font-size:5.75px;color:#e2e2e2;transform:scaleX(0.968);transform-origin:right top;">.00</div>
<div class="t" style="right:232.8px;top:401.73px;font-size:5.75px;color:#e2e2e2;transform:scaleX(0.968);transform-origin:right top;">0.01%</div>
<div class="t" style="right:182.4px;top:401.73px;font-size:5.75px;color:#e2e2e2;transform:scaleX(0.968);transform-origin:right top;">17.61%</div>
<div class="t" style="right:147.2px;top:401.73px;font-size:5.75px;color:#e2e2e2;transform:scaleX(0.883);transform-origin:right top;">0.00%</div>
<div class="t" style="right:72.4px;top:401.73px;font-size:5.75px;color:#e2e2e2;transform:scaleX(0.968);transform-origin:right top;">.00</div>
<div class="t" style="right:22.5px;top:401.73px;font-size:5.75px;color:#e2e2e2;transform:scaleX(0.904);transform-origin:right top;">-</div>
<div class="t" style="left:37.6px;top:409.4px;font-size:5.75px;color:#e2e2e2;transform:scaleX(0.904);transform-origin:left top;">OPT</div>
<div class="t" style="right:558px;top:409.4px;font-size:5.75px;color:#e2e2e2;transform:scaleX(0.968);transform-origin:right top;">0</div>
<div class="t" style="right:499.8px;top:409.4px;font-size:5.75px;color:#e2e2e2;transform:scaleX(0.904);transform-origin:right top;">SPX</div>
<div class="t" style="right:444px;top:409.4px;font-size:5.75px;color:#e2e2e2;transform:scaleX(0.904);transform-origin:right top;">28 NOV 25 (Weeklys)</div>
<div class="t" style="right:392.4px;top:409.4px;font-size:5.75px;color:#e2e2e2;transform:scaleX(0.969);transform-origin:right top;">6850</div>
<div class="t" style="left:384.6px;top:409.4px;font-size:5.75px;color:#e2e2e2;transform:scaleX(0.904);transform-origin:left top;">PUT</div>
<div class="t" style="right:293.6px;top:409.4px;font-size:5.75px;color:#e2e2e2;transform:scaleX(0.968);transform-origin:right top;">.00</div>
<div class="t" style="right:232.8px;top:409.4px;font-size:5.75px;color:#e2e2e2;transform:scaleX(0.968);transform-origin:right top;">0.01%</div>
<div class="t" style="right:182.4px;top:409.4px;font-size:5.75px;color:#e2e2e2;transform:scaleX(0.968);transform-origin:right top;">14.63%</div>
<div class="t" style="right:147.2px;top:409.4px;font-size:5.75px;color:#e2e2e2;transform:scaleX(0.883);transform-origin:right top;">0.00%</div>
<div class="t" style="right:72.4px;top:409.4px;font-size:5.75px;color:#e2e2e2;transform:scaleX(0.968);transform-origin:right top;">.00</div>
<div class="t" style="right:22.5px;top:409.4px;font-size:5.75px;color:#e2e2e2;transform:scaleX(0.904);transform-origin:right top;">-</div>
<div class="t" style="left:37.6px;top:417.07px;font-size:5.75px;color:#e2e2e2;transform:scaleX(0.904);transform-origin:left top;">OPT</div>
<div class="t" style="right:558px;top:417.07px;font-size:5.75px;color:#e2e2e2;transform:scaleX(0.968);transform-origin:right top;">0</div>
<div class="t" style="right:499.8px;top:417.07px;font-size:5.75px;color:#e2e2e2;transform:scaleX(0.904);transform-origin:right top;">SPX</div>
<div class="t" style="right:444px;top:417.07px;font-size:5.75px;color:#e2e2e2;transform:scaleX(0.904);transform-origin:right top;">5 DEC 25 (Weeklys)</div>
<div class="t" style="right:392.4px;top:417.07px;font-size:5.75px;color:#e2e2e2;transform:scaleX(0.969);transform-origin:right top;">6700</div>
<div class="t" style="left:384.6px;top:417.07px;font-size:5.75px;color:#e2e2e2;transform:scaleX(0.904);transform-origin:left top;">PUT</div>
<div class="t" style="right:293.6px;top:417.07px;font-size:5.75px;color:#e2e2e2;transform:scaleX(0.968);transform-origin:right top;">.00</div>
<div class="t" style="right:232.8px;top:417.07px;font-size:5.75px;color:#e2e2e2;transform:scaleX(0.968);transform-origin:right top;">0.73%</div>
<div class="t" style="right:182.4px;top:417.07px;font-size:5.75px;color:#e2e2e2;transform:scaleX(0.968);transform-origin:right top;">17.80%</div>
<div class="t" style="right:147.2px;top:417.07px;font-size:5.75px;color:#e2e2e2;transform:scaleX(0.883);transform-origin:right top;">0.00%</div>
<div class="t" style="right:72.4px;top:417.07px;font-size:5.75px;color:#e2e2e2;transform:scaleX(0.968);transform-origin:right top;">.00</div>
<div class="t" style="right:22.5px;top:417.07px;font-size:5.75px;color:#e2e2e2;transform:scaleX(0.904);transform-origin:right top;">-</div>
<div class="t" style="left:37.6px;top:424.73px;font-size:5.75px;color:#e2e2e2;transform:scaleX(0.904);transform-origin:left top;">OPT</div>
<div class="t" style="right:558px;top:424.73px;font-size:5.75px;color:#e2e2e2;transform:scaleX(0.968);transform-origin:right top;">0</div>
<div class="t" style="right:499.8px;top:424.73px;font-size:5.75px;color:#e2e2e2;transform:scaleX(0.904);transform-origin:right top;">SPX</div>
<div class="t" style="right:444px;top:424.73px;font-size:5.75px;color:#e2e2e2;transform:scaleX(0.904);transform-origin:right top;">5 DEC 25 (Weeklys)</div>
<div class="t" style="right:392.4px;top:424.73px;font-size:5.75px;color:#e2e2e2;transform:scaleX(0.969);transform-origin:right top;">6850</div>
<div class="t" style="left:384.6px;top:424.73px;font-size:5.75px;color:#e2e2e2;transform:scaleX(0.904);transform-origin:left top;">PUT</div>
<div class="t" style="right:293.6px;top:424.73px;font-size:5.75px;color:#e2e2e2;transform:scaleX(0.968);transform-origin:right top;">.00</div>
<div class="t" style="right:232.8px;top:424.73px;font-size:5.75px;color:#e2e2e2;transform:scaleX(0.968);transform-origin:right top;">0.73%</div>
<div class="t" style="right:182.4px;top:424.73px;font-size:5.75px;color:#e2e2e2;transform:scaleX(0.968);transform-origin:right top;">15.08%</div>
<div class="t" style="right:147.2px;top:424.73px;font-size:5.75px;color:#e2e2e2;transform:scaleX(0.883);transform-origin:right top;">0.00%</div>
<div class="t" style="right:72.4px;top:424.73px;font-size:5.75px;color:#e2e2e2;transform:scaleX(0.968);transform-origin:right top;">.00</div>
<div class="t" style="right:22.5px;top:424.73px;font-size:5.75px;color:#e2e2e2;transform:scaleX(0.904);transform-origin:right top;">-</div>
<div class="t" style="left:37.6px;top:432.4px;font-size:5.75px;color:#e2e2e2;transform:scaleX(0.904);transform-origin:left top;">OPT</div>
<div class="t" style="left:105.6px;top:432.4px;font-size:5.75px;color:#e2e2e2;transform:scaleX(0.904);transform-origin:left top;">LONG</div>
<div class="t" style="right:558px;top:432.4px;font-size:5.75px;color:#e2e2e2;transform:scaleX(0.968);transform-origin:right top;">+10</div>
<div class="t" style="right:499.8px;top:432.4px;font-size:5.75px;color:#e2e2e2;transform:scaleX(0.904);transform-origin:right top;">SPX</div>
<div class="t" style="right:444px;top:432.4px;font-size:5.75px;color:#e2e2e2;transform:scaleX(0.904);transform-origin:right top;">12 DEC 25 (Weeklys)</div>
<div class="t" style="right:392.4px;top:432.4px;font-size:5.75px;color:#e2e2e2;transform:scaleX(0.969);transform-origin:right top;">6325</div>
<div class="t" style="left:384.6px;top:432.4px;font-size:5.75px;color:#e2e2e2;transform:scaleX(0.904);transform-origin:left top;">PUT</div>
<div class="t" style="right:293.6px;top:432.4px;font-size:5.75px;color:#e2e2e2;transform:scaleX(0.968);transform-origin:right top;">73.434</div>
<div class="t" style="right:232.8px;top:432.4px;font-size:5.75px;color:#e2e2e2;transform:scaleX(0.968);transform-origin:right top;">0.68%</div>
<div class="t" style="right:182.4px;top:432.4px;font-size:5.75px;color:#e2e2e2;transform:scaleX(0.968);transform-origin:right top;">25.04%</div>
<div class="t" style="right:147.2px;top:432.4px;font-size:5.75px;color:#e2e2e2;transform:scaleX(0.883);transform-origin:right top;">0.00%</div>
<div class="t" style="right:72.4px;top:432.4px;font-size:5.75px;color:#e2e2e2;transform:scaleX(0.968);transform-origin:right top;">-218.11</div>
<div class="t" style="right:22.5px;top:432.4px;font-size:5.75px;color:#e2e2e2;transform:scaleX(0.904);transform-origin:right top;">-</div>
<div class="t" style="left:37.6px;top:440.07px;font-size:5.75px;color:#e2e2e2;transform:scaleX(0.904);transform-origin:left top;">OPT</div>
<div class="t" style="left:105.6px;top:440.07px;font-size:5.75px;color:#e2e2e2;transform:scaleX(0.904);transform-origin:left top;">SHORT</div>
<div class="t" style="right:558px;top:440.07px;font-size:5.75px;color:#e2e2e2;transform:scaleX(0.968);transform-origin:right top;">-20</div>
<div class="t" style="right:499.8px;top:440.07px;font-size:5.75px;color:#e2e2e2;transform:scaleX(0.904);transform-origin:right top;">SPX</div>
<div class="t" style="right:444px;top:440.07px;font-size:5.75px;color:#e2e2e2;transform:scaleX(0.904);transform-origin:right top;">12 DEC 25 (Weeklys)</div>
<div class="t" style="right:392.4px;top:440.07px;font-size:5.75px;color:#e2e2e2;transform:scaleX(0.969);transform-origin:right top;">6430</div>
<div class="t" style="left:384.6px;top:440.07px;font-size:5.75px;color:#e2e2e2;transform:scaleX(0.904);transform-origin:left top;">PUT</div>
<div class="t" style="right:293.6px;top:440.07px;font-size:5.75px;color:#e2e2e2;transform:scaleX(0.968);transform-origin:right top;">97.234</div>
<div class="t" style="right:232.8px;top:440.07px;font-size:5.75px;color:#e2e2e2;transform:scaleX(0.968);transform-origin:right top;">0.68%</div>
<div class="t" style="right:182.4px;top:440.07px;font-size:5.75px;color:#e2e2e2;transform:scaleX(0.968);transform-origin:right top;">23.26%</div>
<div class="t" style="right:147.2px;top:440.07px;font-size:5.75px;color:#e2e2e2;transform:scaleX(0.883);transform-origin:right top;">0.00%</div>
<div class="t" style="right:72.4px;top:440.07px;font-size:5.75px;color:#e2e2e2;transform:scaleX(0.968);transform-origin:right top;">588.80</div>
<div class="t" style="right:22.5px;top:440.07px;font-size:5.75px;color:#e2e2e2;transform:scaleX(0.904);transform-origin:right top;">-</div>
<div class="t" style="left:37.6px;top:447.74px;font-size:5.75px;color:#e2e2e2;transform:scaleX(0.904);transform-origin:left top;">OPT</div>
<div class="t" style="left:105.6px;top:447.74px;font-size:5.75px;color:#e2e2e2;transform:scaleX(0.904);transform-origin:left top;">LONG</div>
<div class="t" style="right:558px;top:447.74px;font-size:5.75px;color:#e2e2e2;transform:scaleX(0.968);transform-origin:right top;">+10</div>
<div class="t" style="right:499.8px;top:447.74px;font-size:5.75px;color:#e2e2e2;transform:scaleX(0.904);transform-origin:right top;">SPX</div>
<div class="t" style="right:444px;top:447.74px;font-size:5.75px;color:#e2e2e2;transform:scaleX(0.904);transform-origin:right top;">12 DEC 25 (Weeklys)</div>
<div class="t" style="right:392.4px;top:447.74px;font-size:5.75px;color:#e2e2e2;transform:scaleX(0.969);transform-origin:right top;">6525</div>
<div class="t" style="left:384.6px;top:447.74px;font-size:5.75px;color:#e2e2e2;transform:scaleX(0.904);transform-origin:left top;">PUT</div>
<div class="t" style="right:293.6px;top:447.74px;font-size:5.75px;color:#e2e2e2;transform:scaleX(0.968);transform-origin:right top;">125.894</div>
<div class="t" style="right:232.8px;top:447.74px;font-size:5.75px;color:#e2e2e2;transform:scaleX(0.968);transform-origin:right top;">0.68%</div>
<div class="t" style="right:182.4px;top:447.74px;font-size:5.75px;color:#e2e2e2;transform:scaleX(0.968);transform-origin:right top;">21.59%</div>
<div class="t" style="right:147.2px;top:447.74px;font-size:5.75px;color:#e2e2e2;transform:scaleX(0.883);transform-origin:right top;">0.00%</div>
<div class="t" style="right:72.4px;top:447.74px;font-size:5.75px;color:#e2e2e2;transform:scaleX(0.968);transform-origin:right top;">-383.07</div>
<div class="t" style="right:22.5px;top:447.74px;font-size:5.75px;color:#e2e2e2;transform:scaleX(0.904);transform-origin:right top;">-</div>
<div class="t" style="left:37.6px;top:455.4px;font-size:5.75px;color:#e2e2e2;transform:scaleX(0.904);transform-origin:left top;">CALENDAR</div>
<div class="t" style="left:105.6px;top:455.4px;font-size:5.75px;color:#e2e2e2;transform:scaleX(0.904);transform-origin:left top;">BUY</div>
<div class="t" style="right:580px;top:455.4px;font-size:5.75px;color:#e2e2e2;transform:scaleX(0.968);transform-origin:right top;">+10</div>
<div class="t" style="right:499.8px;top:455.4px;font-size:5.75px;color:#e2e2e2;transform:scaleX(0.904);transform-origin:right top;">SPX</div>
<div class="t" style="left:279px;top:455.4px;font-size:5.75px;color:#e2e2e2;transform:scaleX(0.904);transform-origin:left top;">18 DEC 25 (Weeklys)</div>
<div class="t" style="left:333.6px;top:455.4px;font-size:5.75px;color:#e2e2e2;transform:scaleX(0.969);transform-origin:left top;">6625</div>
<div class="t" style="left:384.6px;top:455.4px;font-size:5.75px;color:#e2e2e2;transform:scaleX(0.904);transform-origin:left top;">PUT</div>
<div class="t" style="right:306.6px;top:455.4px;font-size:5.75px;color:#e2e2e2;transform:scaleX(0.968);transform-origin:right top;">14.80</div>
<div class="t" style="right:232.8px;top:455.4px;font-size:5.75px;color:#e2e2e2;transform:scaleX(0.968);transform-origin:right top;">1.08%</div>
<div class="t" style="right:182.4px;top:455.4px;font-size:5.75px;color:#e2e2e2;transform:scaleX(0.968);transform-origin:right top;">19.68%</div>
<div class="t" style="right:147.2px;top:455.4px;font-size:5.75px;color:#e2e2e2;transform:scaleX(0.883);transform-origin:right top;">0.00%</div>
<div class="t" style="right:72.4px;top:455.4px;font-size:5.75px;color:#e2e2e2;transform:scaleX(0.968);transform-origin:right top;">7.06</div>
<div class="t" style="right:22.5px;top:455.4px;font-size:5.75px;color:#e2e2e2;transform:scaleX(0.904);transform-origin:right top;">-</div>
<div class="t" style="left:105.6px;top:463.07px;font-size:5.75px;color:#e2e2e2;transform:scaleX(0.904);transform-origin:left top;">SELL</div>
<div class="t" style="right:576px;top:463.07px;font-size:5.75px;color:#e2e2e2;transform:scaleX(0.968);transform-origin:right top;">-10</div>
<div class="t" style="right:499.8px;top:463.07px;font-size:5.75px;color:#e2e2e2;transform:scaleX(0.904);transform-origin:right top;">SPX</div>
<div class="t" style="left:279px;top:463.07px;font-size:5.75px;color:#e2e2e2;transform:scaleX(0.904);transform-origin:left top;">12 DEC 25 (Weeklys)</div>
<div class="t" style="left:333.6px;top:463.07px;font-size:5.75px;color:#e2e2e2;transform:scaleX(0.969);transform-origin:left top;">6625</div>
<div class="t" style="left:384.6px;top:463.07px;font-size:5.75px;color:#e2e2e2;transform:scaleX(0.904);transform-origin:left top;">PUT</div>
<div class="t" style="left:407.5px;width:100px;text-align:center;top:463.07px;font-size:5.75px;color:#e2e2e2;transform:scaleX(0.904);transform-origin:center top;">DEBIT</div>
<div class="t" style="right:232.8px;top:463.07px;font-size:5.75px;color:#e2e2e2;transform:scaleX(0.968);transform-origin:right top;">0.68%</div>
<div class="t" style="right:182.4px;top:463.07px;font-size:5.75px;color:#e2e2e2;transform:scaleX(0.968);transform-origin:right top;">19.82%</div>
<div class="t" style="right:147.2px;top:463.07px;font-size:5.75px;color:#e2e2e2;transform:scaleX(0.883);transform-origin:right top;">0.00%</div>
<div class="t" style="right:22.5px;top:463.07px;font-size:5.75px;color:#e2e2e2;transform:scaleX(0.904);transform-origin:right top;">-</div>
<svg class="b" style="left:0;top:370px" width="775" height="108"><rect x="13.3" y="9.30" width="4.3" height="4.3" fill="#050505" stroke="#5a5a5a" stroke-width="0.6"/><path d="M25 13.60l2-2 1.1 0.7 2.6-2.7" stroke="#505050" stroke-width="0.6" fill="none"/><rect x="633" y="8.90" width="7" height="2.7" fill="#5a5a5a"/><rect x="633" y="12.00" width="7" height="2.7" fill="#5a5a5a"/><path d="M634.8 10.60h3.4M634.8 13.70h3.4" stroke="#999" stroke-width="0.5"/><path d="M643.4 11.40v-1.1a1.5 1.5 0 0 1 3 0" stroke="#f0f0f0" stroke-width="0.7" fill="none"/><rect x="644.5" y="11.30" width="3.9" height="3.4" fill="#f0f0f0"/><rect x="13.3" y="16.97" width="4.3" height="4.3" fill="#050505" stroke="#5a5a5a" stroke-width="0.6"/><path d="M25 21.27l2-2 1.1 0.7 2.6-2.7" stroke="#505050" stroke-width="0.6" fill="none"/><rect x="633" y="16.57" width="7" height="2.7" fill="#5a5a5a"/><rect x="633" y="19.67" width="7" height="2.7" fill="#5a5a5a"/><path d="M634.8 18.27h3.4M634.8 21.37h3.4" stroke="#999" stroke-width="0.5"/><path d="M643.4 19.07v-1.1a1.5 1.5 0 0 1 3 0" stroke="#f0f0f0" stroke-width="0.7" fill="none"/><rect x="644.5" y="18.97" width="3.9" height="3.4" fill="#f0f0f0"/><rect x="13.3" y="24.63" width="4.3" height="4.3" fill="#050505" stroke="#5a5a5a" stroke-width="0.6"/><path d="M25 28.93l2-2 1.1 0.7 2.6-2.7" stroke="#505050" stroke-width="0.6" fill="none"/><rect x="633" y="24.23" width="7" height="2.7" fill="#5a5a5a"/><rect x="633" y="27.33" width="7" height="2.7" fill="#5a5a5a"/><path d="M634.8 25.93h3.4M634.8 29.03h3.4" stroke="#999" stroke-width="0.5"/><path d="M643.4 26.73v-1.1a1.5 1.5 0 0 1 3 0" stroke="#f0f0f0" stroke-width="0.7" fill="none"/><rect x="644.5" y="26.63" width="3.9" height="3.4" fill="#f0f0f0"/><rect x="13.3" y="32.30" width="4.3" height="4.3" fill="#050505" stroke="#5a5a5a" stroke-width="0.6"/><path d="M25 36.60l2-2 1.1 0.7 2.6-2.7" stroke="#505050" stroke-width="0.6" fill="none"/><rect x="633" y="31.90" width="7" height="2.7" fill="#5a5a5a"/><rect x="633" y="35.00" width="7" height="2.7" fill="#5a5a5a"/><path d="M634.8 33.60h3.4M634.8 36.70h3.4" stroke="#999" stroke-width="0.5"/><path d="M643.4 34.40v-1.1a1.5 1.5 0 0 1 3 0" stroke="#f0f0f0" stroke-width="0.7" fill="none"/><rect x="644.5" y="34.30" width="3.9" height="3.4" fill="#f0f0f0"/><rect x="13.3" y="39.97" width="4.3" height="4.3" fill="#050505" stroke="#5a5a5a" stroke-width="0.6"/><path d="M25 44.27l2-2 1.1 0.7 2.6-2.7" stroke="#505050" stroke-width="0.6" fill="none"/><rect x="633" y="39.57" width="7" height="2.7" fill="#5a5a5a"/><rect x="633" y="42.67" width="7" height="2.7" fill="#5a5a5a"/><path d="M634.8 41.27h3.4M634.8 44.37h3.4" stroke="#999" stroke-width="0.5"/><path d="M643.4 42.07v-1.1a1.5 1.5 0 0 1 3 0" stroke="#f0f0f0" stroke-width="0.7" fill="none"/><rect x="644.5" y="41.97" width="3.9" height="3.4" fill="#f0f0f0"/><rect x="13.3" y="47.63" width="4.3" height="4.3" fill="#050505" stroke="#5a5a5a" stroke-width="0.6"/><path d="M25 51.93l2-2 1.1 0.7 2.6-2.7" stroke="#505050" stroke-width="0.6" fill="none"/><rect x="633" y="47.23" width="7" height="2.7" fill="#5a5a5a"/><rect x="633" y="50.33" width="7" height="2.7" fill="#5a5a5a"/><path d="M634.8 48.93h3.4M634.8 52.03h3.4" stroke="#999" stroke-width="0.5"/><path d="M643.4 49.73v-1.1a1.5 1.5 0 0 1 3 0" stroke="#f0f0f0" stroke-width="0.7" fill="none"/><rect x="644.5" y="49.63" width="3.9" height="3.4" fill="#f0f0f0"/><rect x="13.3" y="55.30" width="4.3" height="4.3" fill="#050505" stroke="#5a5a5a" stroke-width="0.6"/><path d="M25 59.60l2-2 1.1 0.7 2.6-2.7" stroke="#505050" stroke-width="0.6" fill="none"/><rect x="633" y="54.90" width="7" height="2.7" fill="#5a5a5a"/><rect x="633" y="58.00" width="7" height="2.7" fill="#5a5a5a"/><path d="M634.8 56.60h3.4M634.8 59.70h3.4" stroke="#999" stroke-width="0.5"/><path d="M643.4 57.40v-1.1a1.5 1.5 0 0 1 3 0" stroke="#f0f0f0" stroke-width="0.7" fill="none"/><rect x="644.5" y="57.30" width="3.9" height="3.4" fill="#f0f0f0"/><rect x="13.3" y="62.97" width="4.3" height="4.3" fill="#050505" stroke="#5a5a5a" stroke-width="0.6"/><path d="M13.9 64.87l1.3 1.6 2.4-3.6" stroke="#f0f0f0" stroke-width="0.8" fill="none"/><path d="M25 67.27l2-2 1.1 0.7 2.6-2.7" stroke="#505050" stroke-width="0.6" fill="none"/><rect x="633" y="62.57" width="7" height="2.7" fill="#5a5a5a"/><rect x="633" y="65.67" width="7" height="2.7" fill="#5a5a5a"/><path d="M634.8 64.27h3.4M634.8 67.37h3.4" stroke="#999" stroke-width="0.5"/><path d="M643.4 65.07v-1.1a1.5 1.5 0 0 1 3 0" stroke="#f0f0f0" stroke-width="0.7" fill="none"/><rect x="644.5" y="64.97" width="3.9" height="3.4" fill="#f0f0f0"/><rect x="13.3" y="70.64" width="4.3" height="4.3" fill="#050505" stroke="#5a5a5a" stroke-width="0.6"/><path d="M13.9 72.54l1.3 1.6 2.4-3.6" stroke="#f0f0f0" stroke-width="0.8" fill="none"/><path d="M25 74.94l2-2 1.1 0.7 2.6-2.7" stroke="#505050" stroke-width="0.6" fill="none"/><rect x="633" y="70.24" width="7" height="2.7" fill="#5a5a5a"/><rect x="633" y="73.34" width="7" height="2.7" fill="#5a5a5a"/><path d="M634.8 71.94h3.4M634.8 75.04h3.4" stroke="#999" stroke-width="0.5"/><path d="M643.4 72.74v-1.1a1.5 1.5 0 0 1 3 0" stroke="#f0f0f0" stroke-width="0.7" fill="none"/><rect x="644.5" y="72.64" width="3.9" height="3.4" fill="#f0f0f0"/><rect x="13.3" y="78.30" width="4.3" height="4.3" fill="#050505" stroke="#5a5a5a" stroke-width="0.6"/><path d="M13.9 80.20l1.3 1.6 2.4-3.6" stroke="#f0f0f0" stroke-width="0.8" fill="none"/><path d="M25 82.60l2-2 1.1 0.7 2.6-2.7" stroke="#505050" stroke-width="0.6" fill="none"/><rect x="633" y="77.90" width="7" height="2.7" fill="#5a5a5a"/><rect x="633" y="81.00" width="7" height="2.7" fill="#5a5a5a"/><path d="M634.8 79.60h3.4M634.8 82.70h3.4" stroke="#999" stroke-width="0.5"/><path d="M643.4 80.40v-1.1a1.5 1.5 0 0 1 3 0" stroke="#f0f0f0" stroke-width="0.7" fill="none"/><rect x="644.5" y="80.30" width="3.9" height="3.4" fill="#f0f0f0"/><rect x="13.3" y="85.97" width="4.3" height="4.3" fill="#050505" stroke="#5a5a5a" stroke-width="0.6"/><path d="M25 90.27l2-2 1.1 0.7 2.6-2.7" stroke="#505050" stroke-width="0.6" fill="none"/><path d="M635 87.97l1.6-1.8 1.6 1.8z M635 89.27l1.6 1.8 1.6-1.8z" fill="#fff"/><path d="M643.4 88.07v-1.1a1.5 1.5 0 0 1 3 0" stroke="#f0f0f0" stroke-width="0.7" fill="none"/><rect x="644.5" y="87.97" width="3.9" height="3.4" fill="#f0f0f0"/><path d="M474.8 87.97l1.6-1.8 1.6 1.8z M474.8 89.27l1.6 1.8 1.6-1.8z" fill="#fff"/><path d="M483.4 88.07v-1.1a1.5 1.5 0 0 1 3 0" stroke="#f0f0f0" stroke-width="0.7" fill="none"/><rect x="484.5" y="87.97" width="3.9" height="3.4" fill="#f0f0f0"/><path d="M202.2 87.97l1.6-1.8 1.6 1.8z M202.2 89.27l1.6 1.8 1.6-1.8z" fill="#fff"/><path d="M210.2 87.27h5l-2.5 2.8z" fill="#fff"/><path d="M756 86.67l3.4 3.4M759.4 86.67l-3.4 3.4" stroke="#eee" stroke-width="0.9"/><path d="M102.0 90.97l1.2-1.2v1.2z" fill="#ddd"/><path d="M152.8 90.97l1.2-1.2v1.2z" fill="#ddd"/><path d="M330.3 90.97l1.2-1.2v1.2z" fill="#ddd"/><path d="M380.6 90.97l1.2-1.2v1.2z" fill="#ddd"/><path d="M431.40000000000003 90.97l1.2-1.2v1.2z" fill="#ddd"/><path d="M635 95.64l1.6-1.8 1.6 1.8z M635 96.94l1.6 1.8 1.6-1.8z" fill="#fff"/><path d="M643.4 95.74v-1.1a1.5 1.5 0 0 1 3 0" stroke="#f0f0f0" stroke-width="0.7" fill="none"/><rect x="644.5" y="95.64" width="3.9" height="3.4" fill="#f0f0f0"/><path d="M330.3 98.64l1.2-1.2v1.2z" fill="#ddd"/></svg>
<div class="t" style="right:22.7px;top:472.13px;font-size:5.75px;color:#e2e2e2;transform:scaleX(0.901);transform-origin:right top;">($9,975.00)</div></body></html>
